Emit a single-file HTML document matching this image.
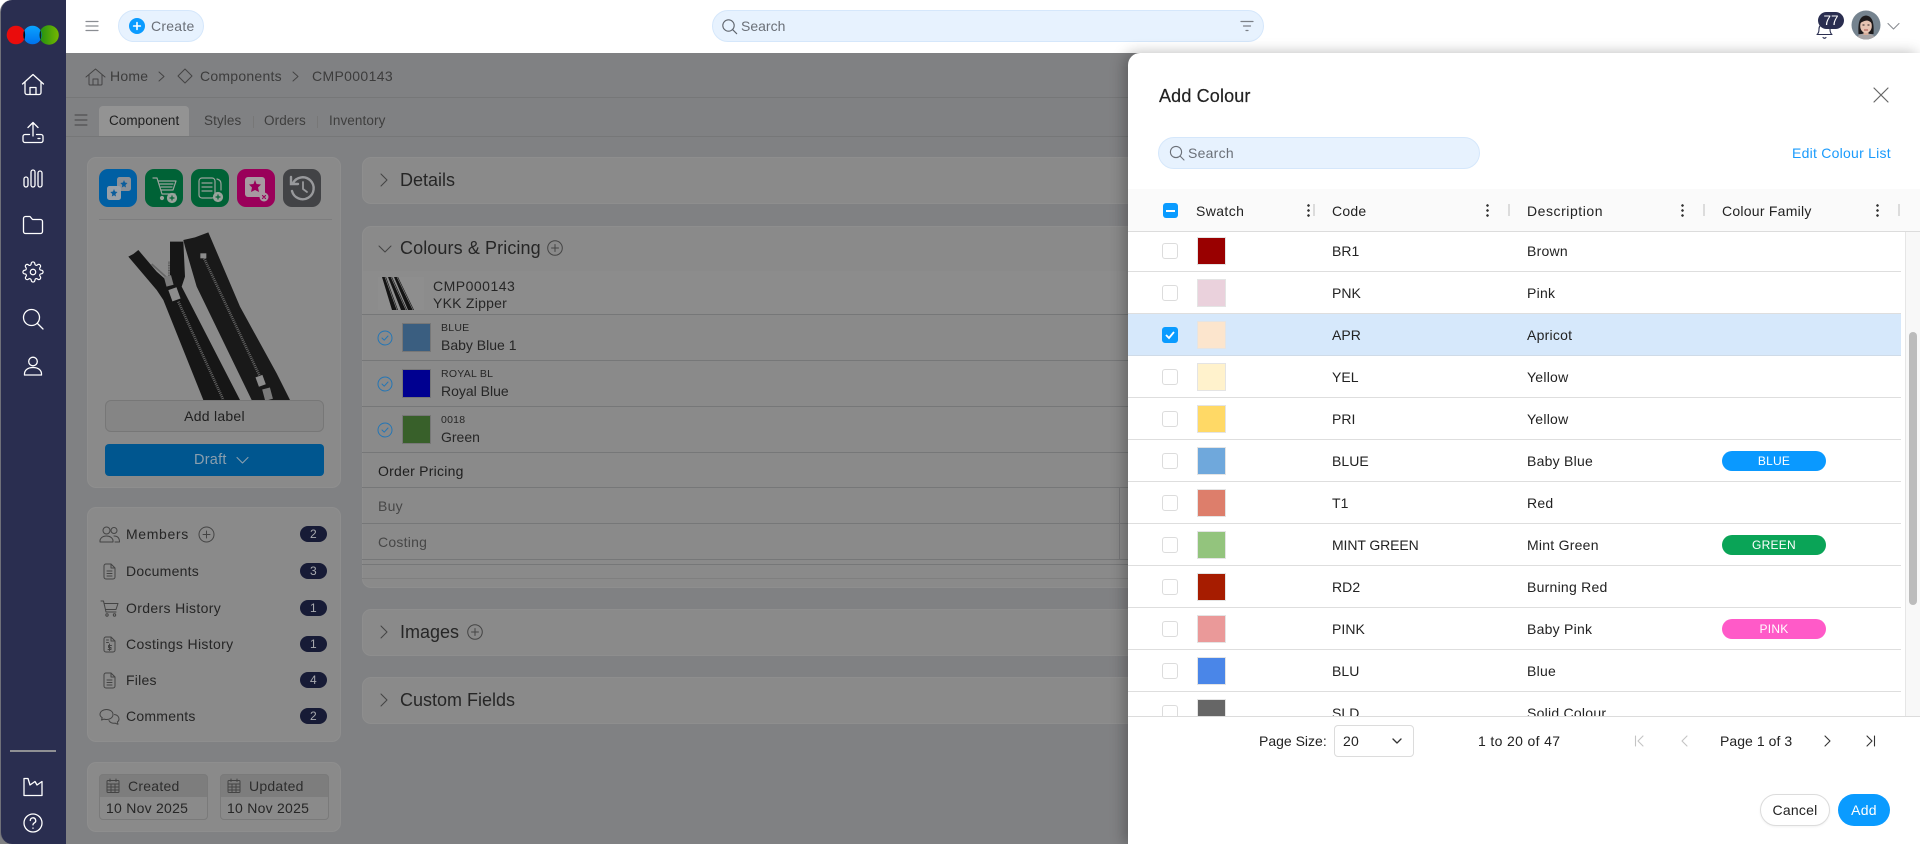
<!DOCTYPE html>
<html lang="en"><head><meta charset="utf-8"><title>Add Colour</title>
<style>
*{box-sizing:border-box}
html,body{margin:0;padding:0}
body{width:1920px;height:844px;overflow:hidden;position:relative;background:#808183;font-family:"Liberation Sans",Arial,sans-serif;font-size:14px;letter-spacing:.25px;color:#222}
.a,.t,svg.i{position:absolute}
.t{line-height:20px;height:20px;white-space:nowrap}
.card{position:absolute;background:#8a8a8a;border:1px solid #8e8e8e;border-radius:9px}
svg.i{fill:none;stroke-linecap:round;stroke-linejoin:round}
.w{stroke:#fff;stroke-width:1.3}
.g{stroke:#444;stroke-width:1}
.dk{color:#262626}
.mid{color:#3c3c3c}
.h{font-size:18px;letter-spacing:0}
.ib{position:absolute;top:169px;width:38px;height:38px;border-radius:9px}
.bd{position:absolute;left:300px;width:27px;height:16px;border-radius:8px;background:#171b36;color:#a9aaaf;font-size:12px;line-height:16px;text-align:center}
.hl{position:absolute;left:362px;width:766px;height:1px;background:#767778}
.sw{position:absolute;left:402px;width:29px;height:29px;border:1px solid #777}
.row{position:absolute;left:0;width:773px;height:42px;border-bottom:1px solid #dedede}
.sel{background:#d6e8fb;border-bottom-color:#cfdbe8}
.cb{position:absolute;left:34px;top:13px;width:16px;height:16px;border:1px solid #dcdcdc;border-radius:3px;background:#fff}
.s{position:absolute;left:69px;top:7px;width:29px;height:28px;border:1px solid #e4e4e4}
.c{position:absolute;left:204px;top:11px;line-height:20px;color:#222;letter-spacing:.05px}
.d{position:absolute;left:399px;top:11px;line-height:20px;color:#222}
.p{position:absolute;left:594px;top:11px;width:104px;height:20px;border-radius:10px;color:#fff;font-size:12px;line-height:20px;text-align:center}
.sep{position:absolute;top:204px;width:2px;height:12px;background:#dcdcdc}
.dots{position:absolute;top:204px;width:3px;height:13px;background:radial-gradient(circle at 1.5px 1.5px,#333 1.2px,transparent 1.4px) 0 0/3px 5px repeat-y}
</style></head><body>

<!-- top bar -->
<div class="a" style="left:0;top:0;width:1920px;height:53px;background:#fff"></div>
<svg class="i" style="left:85px;top:19px;stroke:#8a8d92;stroke-width:1.2" width="14" height="14" viewBox="0 0 14 14"><path d="M1 2.5h12M1 7h12M1 11.5h12"/></svg>
<div class="a" style="left:118px;top:10px;width:86px;height:32px;border-radius:16px;background:#e7f2fe;border:1px solid #d5e7fb"></div>
<div class="a" style="left:129px;top:18px;width:16px;height:16px;border-radius:50%;background:#0a9bff"></div>
<svg class="i" style="left:129px;top:18px;stroke:#fff;stroke-width:1.6" width="16" height="16" viewBox="0 0 16 16"><path d="M8 4.6v6.8M4.6 8h6.8"/></svg>
<div class="t" style="left:151px;top:16px;color:#6b7078">Create</div>

<div class="a" style="left:712px;top:10px;width:552px;height:32px;border-radius:16px;background:#e7f2fe;border:1px solid #d5e7fb"></div>
<svg class="i" style="left:721px;top:18px;stroke:#5f646c;stroke-width:1.1" width="17" height="17" viewBox="0 0 17 17"><circle cx="7.5" cy="7.5" r="5.7"/><path d="M11.7 11.7l4 4"/></svg>
<div class="t" style="left:741px;top:16px;color:#6b7078;letter-spacing:0">Search</div>
<svg class="i" style="left:1240px;top:19px;stroke:#7b8087;stroke-width:1.2" width="14" height="14" viewBox="0 0 14 14"><path d="M1 2.5h12M3.5 7h7M6 11.5h2"/></svg>

<svg class="i" style="left:1815px;top:22px;stroke:#2a2e50;stroke-width:1.1" width="20" height="18" viewBox="0 0 20 18"><path d="M2 12.5c1.5-1 2-2.5 2-5.5s2-5 5-5 6 2 6 5 .5 4.500 2 5.500zM8 15.500q1.500 1.500 3 0"/></svg>
<div class="a" style="left:1818px;top:12px;width:26px;height:17px;border-radius:9px;background:#2a2e50;color:#fff;font-size:13.500px;line-height:17px;text-align:center;letter-spacing:0">77</div>
<svg class="a" style="left:1851px;top:10px" width="30" height="30" viewBox="0 0 30 30"><defs><clipPath id="av"><circle cx="15" cy="15" r="14.500"/></clipPath></defs><g clip-path="url(#av)"><rect width="30" height="30" fill="#75838f"/><path d="M7.500 24c-.5-9 0-18 7.500-18.500 7.500.5 8 9.500 7.500 18.500z" fill="#1d1a1c"/><path d="M5 30c1-5 5-6.500 10-6.500s9 1.500 10 6.500z" fill="#a8a4a6"/><rect x="12.500" y="21" width="5" height="4" fill="#d7ae9c"/><ellipse cx="15" cy="16" rx="5.800" ry="7" fill="#e6c3b2"/><path d="M9 13.500c1-4 3.500-5.500 6-5.500s5 1.500 6 5.500c-1.500-2-3.500-2.800-5-3-2 .2-5 1-7 3z" fill="#1d1a1c"/><path d="M13 20h4" stroke="#a8504c" stroke-width="1.100"/><path d="M11.500 15h2M16.500 15h2" stroke="#2a2224" stroke-width=".9"/></g></svg>
<svg class="i" style="left:1887px;top:22px;stroke:#8a8d92;stroke-width:1.1" width="13" height="9" viewBox="0 0 13 9"><path d="M1 1.500l5.500 5.500 5.500-5.500"/></svg>

<!-- sidebar -->
<div class="a" style="left:0;top:0;width:66px;height:844px;background:#2a2e50;border-left:1px solid #6f7079;border-radius:12px 0 0 12px"></div>
<svg class="a" style="left:5px;top:23px" width="56" height="24" viewBox="0 0 56 24"><defs><linearGradient id="gr" x1="0" x2="1" y1="0" y2="0"><stop offset="0" stop-color="#1f8f12"/><stop offset="1" stop-color="#76b800"/></linearGradient><linearGradient id="bl" x1="0" x2="0" y1="0" y2="1"><stop offset="0" stop-color="#0aa4ff"/><stop offset="1" stop-color="#0072ee"/></linearGradient></defs><circle cx="11" cy="12" r="9.300" fill="#ea0c0c"/><circle cx="44" cy="12" r="9.800" fill="url(#gr)"/><circle cx="27.500" cy="12" r="9.300" fill="url(#bl)"/><path d="M19.300 7Q17.200 12 19.300 17Q21 12 19.300 7z" fill="#0a0a14"/><path d="M35.500 7Q33.500 12 35.500 17Q37.200 12 35.500 7z" fill="#0c2a18"/></svg>
<svg class="i w" style="left:21px;top:73px" width="24" height="23" viewBox="0 0 24 23"><path d="M1.500 11L12 1.500 22.500 11M4 9v10.500a2 2 0 0 0 2 2h12a2 2 0 0 0 2-2V9M9 21.500v-7h6v7"/></svg>
<svg class="i w" style="left:22px;top:121px" width="22" height="23" viewBox="0 0 22 23"><path d="M11 15V2M6 6.500L11 1.500l5 5M7.500 13.500H3a2 2 0 0 0-2 2v4a2 2 0 0 0 2 2h16a2 2 0 0 0 2-2v-4a2 2 0 0 0-2-2h-4.500M16 17.500h2"/></svg>
<svg class="i w" style="left:23px;top:169px" width="20" height="19" viewBox="0 0 20 19"><rect x="1" y="8" width="4" height="10" rx="2"/><rect x="8" y="1" width="4" height="17" rx="2"/><rect x="15" y="2" width="4" height="16" rx="2"/></svg>
<svg class="i w" style="left:22px;top:215px" width="22" height="20" viewBox="0 0 22 20"><path d="M1.500 3.500a2 2 0 0 1 2-2h4.500l2.500 3h8a2 2 0 0 1 2 2v10a2 2 0 0 1-2 2h-15a2 2 0 0 1-2-2z"/></svg>
<svg class="i w" style="left:22px;top:261px;stroke-width:1.3" width="22" height="22" viewBox="0 0 24 24"><circle cx="12" cy="12" r="3"/><path d="M19.400 15a1.650 1.650 0 0 0 .33 1.820l.06.06a2 2 0 0 1 0 2.830 2 2 0 0 1-2.830 0l-.06-.06a1.650 1.650 0 0 0-1.820-.33 1.650 1.650 0 0 0-1 1.510V21a2 2 0 0 1-2 2 2 2 0 0 1-2-2v-.09A1.650 1.650 0 0 0 9 19.400a1.650 1.650 0 0 0-1.820.33l-.06.06a2 2 0 0 1-2.830 0 2 2 0 0 1 0-2.830l.06-.06a1.650 1.650 0 0 0 .33-1.820 1.650 1.650 0 0 0-1.510-1H3a2 2 0 0 1-2-2 2 2 0 0 1 2-2h.09A1.650 1.650 0 0 0 4.600 9a1.650 1.650 0 0 0-.33-1.820l-.06-.06a2 2 0 0 1 0-2.830 2 2 0 0 1 2.830 0l.06.06a1.650 1.650 0 0 0 1.820.33H9a1.650 1.650 0 0 0 1-1.510V3a2 2 0 0 1 2-2 2 2 0 0 1 2 2v.09a1.650 1.650 0 0 0 1 1.510 1.650 1.650 0 0 0 1.820-.33l.06-.06a2 2 0 0 1 2.830 0 2 2 0 0 1 0 2.830l-.06.06a1.650 1.650 0 0 0-.33 1.820V9a1.650 1.650 0 0 0 1.510 1H21a2 2 0 0 1 2 2 2 2 0 0 1-2 2h-.09a1.650 1.650 0 0 0-1.510 1z"/></svg>
<svg class="i w" style="left:22px;top:308px" width="22" height="22" viewBox="0 0 22 22"><circle cx="9.500" cy="9.500" r="8"/><path d="M15.500 15.500l5.500 5.500"/></svg>
<svg class="i w" style="left:23px;top:356px" width="20" height="20" viewBox="0 0 20 20"><circle cx="10" cy="5.500" r="4.300"/><path d="M1.500 19c-.5-5 3.500-7.500 8.500-7.500s9 2.500 8.500 7.500z"/></svg>
<div class="a" style="left:10px;top:750px;width:46px;height:2px;background:#8f9094"></div>
<svg class="i w" style="left:23px;top:777px" width="20" height="20" viewBox="0 0 20 20"><path d="M1 1.500v17h18V4.500l-5 3.500-2-3.500-5 3.500-2-6.500z"/></svg>
<svg class="i w" style="left:23px;top:813px" width="20" height="20" viewBox="0 0 20 20"><circle cx="10" cy="10" r="9"/><path d="M7.300 7.500a2.700 2.700 0 1 1 4 2.400c-.9.500-1.300 1-1.300 2M10 15v.3"/></svg>

<!-- breadcrumb -->
<svg class="i g" style="left:85px;top:68px" width="21" height="18" viewBox="0 0 21 18"><path d="M1 9l9.500-8L20 9M4 7v9a1 1 0 0 0 1 1h11a1 1 0 0 0 1-1V7M8 17v-6h5v6"/></svg>
<div class="t mid" style="left:110px;top:66px">Home</div>
<svg class="i g" style="left:158px;top:71px" width="7" height="11" viewBox="0 0 7 11"><path d="M1 1l5 4.500L1 10"/></svg>
<svg class="i g" style="left:177px;top:68px" width="16" height="16" viewBox="0 0 16 16"><path d="M8 1l7 7-7 7-7-7z"/></svg>
<div class="t mid" style="left:200px;top:66px">Components</div>
<svg class="i g" style="left:292px;top:71px" width="7" height="11" viewBox="0 0 7 11"><path d="M1 1l5 4.500L1 10"/></svg>
<div class="t mid" style="left:312px;top:66px;letter-spacing:.35px">CMP000143</div>
<div class="a" style="left:66px;top:97px;width:1062px;height:1px;background:#767778"></div>

<!-- tabs -->
<svg class="i g" style="left:74px;top:113px" width="14" height="14" viewBox="0 0 14 14"><path d="M1 2h12M1 7h12M1 12h12"/></svg>
<div class="a" style="left:99px;top:106px;width:90px;height:30px;background:#939393;border-radius:4px 4px 0 0"></div>
<div class="t" style="left:109px;top:111px;font-size:13.500px;color:#1f1f1f;letter-spacing:.05px">Component</div>
<div class="t" style="left:204px;top:111px;font-size:13.500px;color:#3e3e3e;letter-spacing:.1px">Styles</div>
<div class="a" style="left:253px;top:116px;width:1px;height:12px;background:#777"></div>
<div class="t" style="left:264px;top:111px;font-size:13.500px;color:#3e3e3e;letter-spacing:.1px">Orders</div>
<div class="a" style="left:317px;top:116px;width:1px;height:12px;background:#777"></div>
<div class="t" style="left:329px;top:111px;font-size:13.500px;color:#3e3e3e;letter-spacing:.1px">Inventory</div>
<div class="a" style="left:66px;top:136px;width:1062px;height:1px;background:#767778"></div>

<!-- left card 1 -->
<div class="card" style="left:87px;top:157px;width:254px;height:331px"></div>
<div class="ib" style="left:99px;background:#005fa3"></div>
<svg class="i" style="left:99px;top:169px" width="38" height="38" viewBox="0 0 38 38"><rect x="18" y="8" width="14" height="14" rx="2.500" fill="#8b9097"/><rect x="8" y="17" width="14" height="14" rx="2.500" fill="#9aa0a7"/><path d="M25 11l1 2.500 2.500.5-2 2 .5 2.500-2-1.300-2.200 1.300.5-2.500-2-2 2.700-.5zM15 20l1 2.500 2.500.5-2 2 .5 2.500-2-1.300-2.200 1.300.5-2.500-2-2 2.700-.5z" fill="#0b5d9c"/></svg>
<div class="ib" style="left:145px;background:#006236"></div>
<svg class="i" style="left:145px;top:169px;stroke:#9aa39c;stroke-width:1.200" width="38" height="38" viewBox="0 0 38 38"><path d="M8 9h4l5 16h13M13 12h18l-3 9H16M15 15h13M16 18h11"/><circle cx="17" cy="29" r="1.500" fill="#9aa39c"/><circle cx="27" cy="29" r="4.500" fill="#9aa39c"/><path d="M27 27v4M25 29h4" stroke="#006236"/></svg>
<div class="ib" style="left:191px;background:#006236"></div>
<svg class="i" style="left:191px;top:169px;stroke:#9aa39c;stroke-width:1.200" width="38" height="38" viewBox="0 0 38 38"><rect x="8" y="9" width="16" height="20" rx="3"/><path d="M11 14h10M11 18h10M11 22h10M26 10q4 1 4 5v6"/><circle cx="27" cy="28" r="4.500" fill="#9aa39c"/><path d="M27 26v4M25 28h4" stroke="#006236"/></svg>
<div class="ib" style="left:237px;background:#9a005a"></div>
<svg class="i" style="left:237px;top:169px" width="38" height="38" viewBox="0 0 38 38"><rect x="8" y="8" width="20" height="20" rx="3" fill="#a79aa1"/><path d="M18 11l1.500 4 4.500.5-3 3 1 4.500-4-2-4 2 1-4.500-3-3 4.500-.5z" fill="#9a005a"/><circle cx="27" cy="28" r="4.500" fill="#a79aa1"/><path d="M25.500 26.500l3 3m0-3l-3 3" stroke="#9a005a" stroke-width="1.200"/></svg>
<div class="ib" style="left:283px;background:#424346"></div>
<svg class="i" style="left:283px;top:169px;stroke:#98999c;stroke-width:2.400" width="38" height="38" viewBox="0 0 38 38"><path d="M10 14a11 11 0 1 1-1 8"/><path d="M8 8v7h7" stroke-linejoin="miter"/><path d="M20 13v7l4 3" stroke-width="1.800"/></svg>
<div class="a" style="left:99px;top:219px;width:233px;height:1px;background:#7d7d7e"></div>

<!-- zipper -->
<svg class="a" style="left:95px;top:160px" width="240" height="240" viewBox="0 0 720 720">
<path d="M100 290l15-8 15-12 55 65 40 35 0-125 40 0 5 105-10 30 175 340H325L205 420l-20-30z" fill="#161616"/>
<path d="M270 260l-5-20 35-8 40-15 95 223 110 200 40 80H470L305 380z" fill="#191919"/>
<path d="M250 425l135 295" stroke="#646464" stroke-width="8" stroke-dasharray="3 3" fill="none"/>
<path d="M325 290l170 360" stroke="#646464" stroke-width="8" stroke-dasharray="3 3" fill="none"/>
<path d="M170 312l50 45" stroke="#666" stroke-width="5" fill="none"/>
<path d="M222 305v45" stroke="#5a5a5a" stroke-width="6" stroke-dasharray="3 2" fill="none"/>
<rect x="210" y="348" width="22" height="30" fill="#7a7a7a" transform="rotate(-15 220 362)"/>
<rect x="225" y="385" width="26" height="36" fill="#8c8c8c" transform="rotate(-20 238 402)"/>
<rect x="316" y="280" width="18" height="15" fill="#8c8c8c"/>
<rect x="485" y="648" width="22" height="30" fill="#8c8c8c" transform="rotate(-20 495 660)"/>
<rect x="505" y="685" width="24" height="35" fill="#7a7a7a" transform="rotate(-15 517 700)"/>
</svg>
<div class="a" style="left:105px;top:400px;width:219px;height:32px;border-radius:6px;background:#858585;border:1px solid #777;text-align:center;line-height:30px;color:#1f1f1f">Add label</div>
<div class="a" style="left:105px;top:444px;width:219px;height:32px;border-radius:4px;background:#00568f"></div>
<div class="t" style="left:194px;top:450px;color:#8b9fae;font-size:14.500px">Draft</div>
<svg class="i" style="left:236px;top:456px;stroke:#8b9fae;stroke-width:1.100" width="13" height="9" viewBox="0 0 13 9"><path d="M1 1.500l5.500 5.500 5.500-5.500"/></svg>

<!-- left card 2 -->
<div class="card" style="left:87px;top:507px;width:254px;height:235px"></div>
<svg class="i g" style="left:99px;top:526px" width="21" height="17" viewBox="0 0 21 17"><circle cx="7.500" cy="4.500" r="3.500"/><circle cx="15" cy="4.500" r="3"/><path d="M1 16c-.5-4 3-6 6.500-6s7 2 6.500 6zM15 10c3 0 5.500 1.500 5.500 6H16"/></svg>
<div class="t dk" style="left:126px;top:524px;letter-spacing:.65px">Members</div>
<svg class="i g" style="left:198px;top:526px" width="17" height="17" viewBox="0 0 17 17"><circle cx="8.500" cy="8.500" r="7.500"/><path d="M8.500 5v7M5 8.500h7"/></svg>
<div class="bd" style="top:526px">2</div>
<svg class="i g" style="left:103px;top:563px" width="13" height="17" viewBox="0 0 13 17"><path d="M1 3a2 2 0 0 1 2-2h5l4 4v9a2 2 0 0 1-2 2H3a2 2 0 0 1-2-2zM8 1v4h4M4 8h5M4 10.500h5M4 13h5"/></svg>
<div class="t dk" style="left:126px;top:561px">Documents</div>
<div class="bd" style="top:563px">3</div>
<svg class="i g" style="left:100px;top:600px" width="19" height="17" viewBox="0 0 19 17"><path d="M1 1h2.500l2.500 11h10M4 3.500h14l-2 6H5.500"/><circle cx="7" cy="15" r="1.200"/><circle cx="14.500" cy="15" r="1.200"/></svg>
<div class="t dk" style="left:126px;top:598px;letter-spacing:.35px">Orders History</div>
<div class="bd" style="top:600px">1</div>
<svg class="i g" style="left:103px;top:636px" width="13" height="17" viewBox="0 0 13 17"><path d="M1 3a2 2 0 0 1 2-2h5l4 4v9a2 2 0 0 1-2 2H3a2 2 0 0 1-2-2zM8 1v4h4M3.500 4h2M3.500 6.500h2M6.500 8v6.500M8.500 9.500h-3v2h2.500v2h-3"/></svg>
<div class="t dk" style="left:126px;top:634px;letter-spacing:.35px">Costings History</div>
<div class="bd" style="top:636px">1</div>
<svg class="i g" style="left:103px;top:672px" width="13" height="17" viewBox="0 0 13 17"><path d="M1 3a2 2 0 0 1 2-2h5l4 4v9a2 2 0 0 1-2 2H3a2 2 0 0 1-2-2zM8 1v4h4M4 8h5M4 10.500h5M4 13h5"/></svg>
<div class="t dk" style="left:126px;top:670px">Files</div>
<div class="bd" style="top:672px">4</div>
<svg class="i g" style="left:99px;top:708px" width="21" height="17" viewBox="0 0 21 17"><path d="M1 6.500C1 3.500 4 1.500 7.500 1.500S14 3.500 14 6.500s-3 5-6.500 5c-1 0-2-.2-2.500-.4L2.500 12l.7-2.300C1.800 8.800 1 7.800 1 6.500zM15.500 6.500c2.500.5 4.500 2 4.500 4.500 0 1.200-.6 2.300-1.700 3l.7 2.300-3-1.200c-2.500.5-5-.5-6-2.500"/></svg>
<div class="t dk" style="left:126px;top:706px">Comments</div>
<div class="bd" style="top:708px">2</div>

<!-- left card 3 -->
<div class="card" style="left:87px;top:762px;width:254px;height:70px"></div>
<div class="a" style="left:99px;top:774px;width:109px;height:46px;border:1px solid #7a7a7a;border-radius:4px;background:linear-gradient(#7d7d7d 0 22px,#8a8a8a 22px)"></div>
<div class="a" style="left:220px;top:774px;width:109px;height:46px;border:1px solid #7a7a7a;border-radius:4px;background:linear-gradient(#7d7d7d 0 22px,#8a8a8a 22px)"></div>
<svg class="i g" style="left:106px;top:778px" width="14" height="15" viewBox="0 0 14 15"><rect x="1" y="2.500" width="12" height="12" rx="1"/><path d="M1 6h12M1 9h12M1 12h12M5 6v8.500M9 6v8.500M4 1v2.500M10 1v2.500"/></svg>
<div class="t" style="left:128px;top:776px;color:#2d2d2d">Created</div>
<div class="t" style="left:106px;top:798px;color:#262626">10 Nov 2025</div>
<svg class="i g" style="left:227px;top:778px" width="14" height="15" viewBox="0 0 14 15"><rect x="1" y="2.500" width="12" height="12" rx="1"/><path d="M1 6h12M1 9h12M1 12h12M5 6v8.500M9 6v8.500M4 1v2.500M10 1v2.500"/></svg>
<div class="t" style="left:249px;top:776px;color:#2d2d2d">Updated</div>
<div class="t" style="left:227px;top:798px;color:#262626">10 Nov 2025</div>

<!-- middle cards -->
<div class="card" style="left:362px;top:157px;width:800px;height:47px"></div>
<svg class="i g" style="left:380px;top:173px" width="8" height="14" viewBox="0 0 8 14"><path d="M1 1l6 6-6 6"/></svg>
<div class="t dk h" style="left:400px;top:170px">Details</div>

<div class="card" style="left:362px;top:226px;width:800px;height:362px"></div>
<svg class="i g" style="left:378px;top:245px" width="14" height="8" viewBox="0 0 14 8"><path d="M1 1l6 6 6-6"/></svg>
<div class="t dk h" style="left:400px;top:238px;letter-spacing:.1px">Colours &amp; Pricing</div>
<svg class="i g" style="left:547px;top:240px" width="16" height="16" viewBox="0 0 16 16"><circle cx="8" cy="8" r="7.300"/><path d="M8 4.500v7M4.500 8h7"/></svg>
<div class="a" style="left:363px;top:271px;width:765px;height:43px;background:#8c8c8c"></div>
<svg class="a" style="left:378px;top:277px" width="46" height="33" viewBox="0 0 46 33"><rect width="46" height="33" fill="#8e8e8e"/><path d="M4 0h4l12 33h-6zM10 0h4l15 33h-6zM16 0h4l16 33h-6z" fill="#141414"/><path d="M7 0l12 33M13 0l15 33M19 0l16 33" stroke="#8a8a8a" stroke-width=".6" fill="none"/></svg>
<div class="t dk" style="left:433px;top:276px;letter-spacing:.5px">CMP000143</div>
<div class="t dk" style="left:433px;top:293px">YKK Zipper</div>
<div class="hl" style="top:314px"></div>
<svg class="i" style="left:377px;top:330px;stroke:#2576b5;stroke-width:1" width="16" height="16" viewBox="0 0 16 16"><circle cx="8" cy="8" r="7"/><path d="M5 8l2.200 2.200L11 6"/></svg>
<div class="sw" style="top:323px;background:#3a5e80"></div>
<div class="t dk" style="left:441px;top:318px;font-size:10.500px">BLUE</div>
<div class="t dk" style="left:441px;top:335px;letter-spacing:0">Baby Blue 1</div>
<div class="hl" style="top:360px"></div>
<svg class="i" style="left:377px;top:376px;stroke:#2576b5;stroke-width:1" width="16" height="16" viewBox="0 0 16 16"><circle cx="8" cy="8" r="7"/><path d="M5 8l2.200 2.200L11 6"/></svg>
<div class="sw" style="top:369px;background:#000090"></div>
<div class="t dk" style="left:441px;top:364px;font-size:10.500px">ROYAL BL</div>
<div class="t dk" style="left:441px;top:381px;letter-spacing:0">Royal Blue</div>
<div class="hl" style="top:406px"></div>
<svg class="i" style="left:377px;top:422px;stroke:#2576b5;stroke-width:1" width="16" height="16" viewBox="0 0 16 16"><circle cx="8" cy="8" r="7"/><path d="M5 8l2.200 2.200L11 6"/></svg>
<div class="sw" style="top:415px;background:#38602a"></div>
<div class="t dk" style="left:441px;top:410px;font-size:10.500px">0018</div>
<div class="t dk" style="left:441px;top:427px;letter-spacing:0">Green</div>
<div class="hl" style="top:452px"></div>
<div class="t" style="left:378px;top:461px;color:#1e1e1e">Order Pricing</div>
<div class="hl" style="top:487px"></div>
<div class="t" style="left:378px;top:496px;color:#474747">Buy</div>
<div class="hl" style="top:523px"></div>
<div class="t" style="left:378px;top:532px;color:#474747">Costing</div>
<div class="hl" style="top:559px"></div>
<div class="hl" style="top:564px"></div>
<div class="hl" style="top:578px;background:#7f7f7f"></div>
<div class="a" style="left:1119px;top:487px;width:1px;height:72px;background:#767778"></div>

<div class="card" style="left:362px;top:609px;width:800px;height:47px"></div>
<svg class="i g" style="left:380px;top:625px" width="8" height="14" viewBox="0 0 8 14"><path d="M1 1l6 6-6 6"/></svg>
<div class="t dk h" style="left:400px;top:622px">Images</div>
<svg class="i g" style="left:467px;top:624px" width="16" height="16" viewBox="0 0 16 16"><circle cx="8" cy="8" r="7.300"/><path d="M8 4.500v7M4.500 8h7"/></svg>
<div class="card" style="left:362px;top:677px;width:800px;height:47px"></div>
<svg class="i g" style="left:380px;top:693px" width="8" height="14" viewBox="0 0 8 14"><path d="M1 1l6 6-6 6"/></svg>
<div class="t dk h" style="left:400px;top:690px">Custom Fields</div>

<!-- drawer -->
<div class="a" style="left:1128px;top:53px;width:792px;height:791px;background:#fff;border-radius:12px 0 0 0;box-shadow:-4px 0 14px rgba(0,0,0,.28)"></div>
<div class="t" style="left:1159px;top:86px;font-size:18px;color:#222;letter-spacing:.15px;-webkit-text-stroke:.2px #222">Add Colour</div>
<svg class="i" style="left:1873px;top:87px;stroke:#666;stroke-width:1.200" width="16" height="16" viewBox="0 0 16 16"><path d="M1 1l14 14M15 1L1 15"/></svg>
<div class="a" style="left:1158px;top:137px;width:322px;height:32px;border-radius:16px;background:#e7f2fe;border:1px solid #d5e7fb"></div>
<svg class="i" style="left:1169px;top:145px;stroke:#6b7078;stroke-width:1.100" width="16" height="16" viewBox="0 0 16 16"><circle cx="7" cy="7" r="5.600"/><path d="M11 11l4 4"/></svg>
<div class="t" style="left:1188px;top:143px;color:#6b7078">Search</div>
<div class="t" style="left:1792px;top:143px;color:#1a9bfc">Edit Colour List</div>

<!-- table header -->
<div class="a" style="left:1128px;top:189px;width:792px;height:43px;background:#fafafa;border-bottom:1px solid #dcdcdc"></div>
<div class="a" style="left:1163px;top:203px;width:15px;height:15px;border-radius:3px;background:#0a9bff"></div>
<div class="a" style="left:1166px;top:210px;width:9px;height:2px;background:#fff"></div>
<div class="t" style="left:1196px;top:201px;letter-spacing:.4px">Swatch</div>
<div class="t" style="left:1332px;top:201px">Code</div>
<div class="t" style="left:1527px;top:201px;letter-spacing:.55px">Description</div>
<div class="t" style="left:1722px;top:201px">Colour Family</div>
<div class="dots" style="left:1307px"></div><div class="sep" style="left:1313px"></div>
<div class="dots" style="left:1486px"></div><div class="sep" style="left:1508px"></div>
<div class="dots" style="left:1681px"></div><div class="sep" style="left:1703px"></div>
<div class="dots" style="left:1876px"></div><div class="sep" style="left:1898px"></div>

<!-- table body -->
<div class="a" style="left:1128px;top:232px;width:773px;height:484px;overflow:hidden">
<div style="position:absolute;left:0;top:-2px;width:773px">
<div class="row" style="top:0"><div class="cb"></div><div class="s" style="background:#990000"></div><div class="c">BR1</div><div class="d">Brown</div></div>
<div class="row" style="top:42px"><div class="cb"></div><div class="s" style="background:#ead1dc"></div><div class="c">PNK</div><div class="d">Pink</div></div>
<div class="row sel" style="top:84px"><div class="cb" style="background:#0a9bff;border-color:#0a9bff"><svg style="position:absolute;left:2px;top:2px" width="10" height="10" viewBox="0 0 10 10" fill="none" stroke="#fff" stroke-width="1.800"><path d="M1 5l3 3 5-6"/></svg></div><div class="s" style="background:#fce5cd"></div><div class="c">APR</div><div class="d">Apricot</div></div>
<div class="row" style="top:126px"><div class="cb"></div><div class="s" style="background:#fff2cc"></div><div class="c">YEL</div><div class="d">Yellow</div></div>
<div class="row" style="top:168px"><div class="cb"></div><div class="s" style="background:#ffd966"></div><div class="c">PRI</div><div class="d">Yellow</div></div>
<div class="row" style="top:210px"><div class="cb"></div><div class="s" style="background:#6fa8dc"></div><div class="c">BLUE</div><div class="d">Baby Blue</div><div class="p" style="background:#0a99ff">BLUE</div></div>
<div class="row" style="top:252px"><div class="cb"></div><div class="s" style="background:#dd7e6b"></div><div class="c">T1</div><div class="d">Red</div></div>
<div class="row" style="top:294px"><div class="cb"></div><div class="s" style="background:#93c47d"></div><div class="c" style="letter-spacing:-.1px">MINT GREEN</div><div class="d">Mint Green</div><div class="p" style="background:#0aa457">GREEN</div></div>
<div class="row" style="top:336px"><div class="cb"></div><div class="s" style="background:#a61c00"></div><div class="c">RD2</div><div class="d">Burning Red</div></div>
<div class="row" style="top:378px"><div class="cb"></div><div class="s" style="background:#ea9999"></div><div class="c">PINK</div><div class="d">Baby Pink</div><div class="p" style="background:#ff5ac8">PINK</div></div>
<div class="row" style="top:420px"><div class="cb"></div><div class="s" style="background:#4a86e8"></div><div class="c">BLU</div><div class="d">Blue</div></div>
<div class="row" style="top:462px"><div class="cb"></div><div class="s" style="background:#666666"></div><div class="c">SLD</div><div class="d">Solid Colour</div></div>
</div></div>

<!-- scrollbar -->
<div class="a" style="left:1905px;top:232px;width:15px;height:484px;background:#f8f8f8;border-left:1px solid #e6e6e6"></div>
<div class="a" style="left:1909px;top:332px;width:8px;height:273px;border-radius:4px;background:#bcbcbc"></div>

<!-- footer -->
<div class="a" style="left:1128px;top:716px;width:792px;height:1px;background:#dcdcdc"></div>
<div class="t" style="left:1259px;top:731px;letter-spacing:0">Page Size:</div>
<div class="a" style="left:1334px;top:725px;width:80px;height:32px;border:1px solid #dcdcdc;border-radius:4px"></div>
<div class="t" style="left:1343px;top:731px">20</div>
<svg class="i" style="left:1392px;top:738px;stroke:#333;stroke-width:1.300" width="10" height="7" viewBox="0 0 10 7"><path d="M1 1l4 4 4-4"/></svg>
<div class="t" style="left:1478px;top:731px;letter-spacing:.35px">1 to 20 of 47</div>
<svg class="i" style="left:1634px;top:735px;stroke:#c4c4c4;stroke-width:1.100" width="10" height="12" viewBox="0 0 10 12"><path d="M1.500 1v10M9 1L4 6l5 5"/></svg>
<svg class="i" style="left:1681px;top:735px;stroke:#c4c4c4;stroke-width:1.100" width="7" height="12" viewBox="0 0 7 12"><path d="M6 1L1 6l5 5"/></svg>
<div class="t" style="left:1720px;top:731px;letter-spacing:.05px">Page 1 of 3</div>
<svg class="i" style="left:1824px;top:735px;stroke:#333;stroke-width:1.100" width="7" height="12" viewBox="0 0 7 12"><path d="M1 1l5 5-5 5"/></svg>
<svg class="i" style="left:1866px;top:735px;stroke:#333;stroke-width:1.100" width="10" height="12" viewBox="0 0 10 12"><path d="M8.500 1v10M1 1l5 5-5 5"/></svg>
<div class="a" style="left:1760px;top:794px;width:70px;height:32px;border:1px solid #dcdcdc;border-radius:16px;background:#fff;text-align:center;line-height:30px;color:#222;box-shadow:0 1px 2px rgba(0,0,0,.06)">Cancel</div>
<div class="a" style="left:1838px;top:794px;width:52px;height:32px;border-radius:16px;background:#0a9bff;text-align:center;line-height:32px;color:#fff">Add</div>
</body></html>
